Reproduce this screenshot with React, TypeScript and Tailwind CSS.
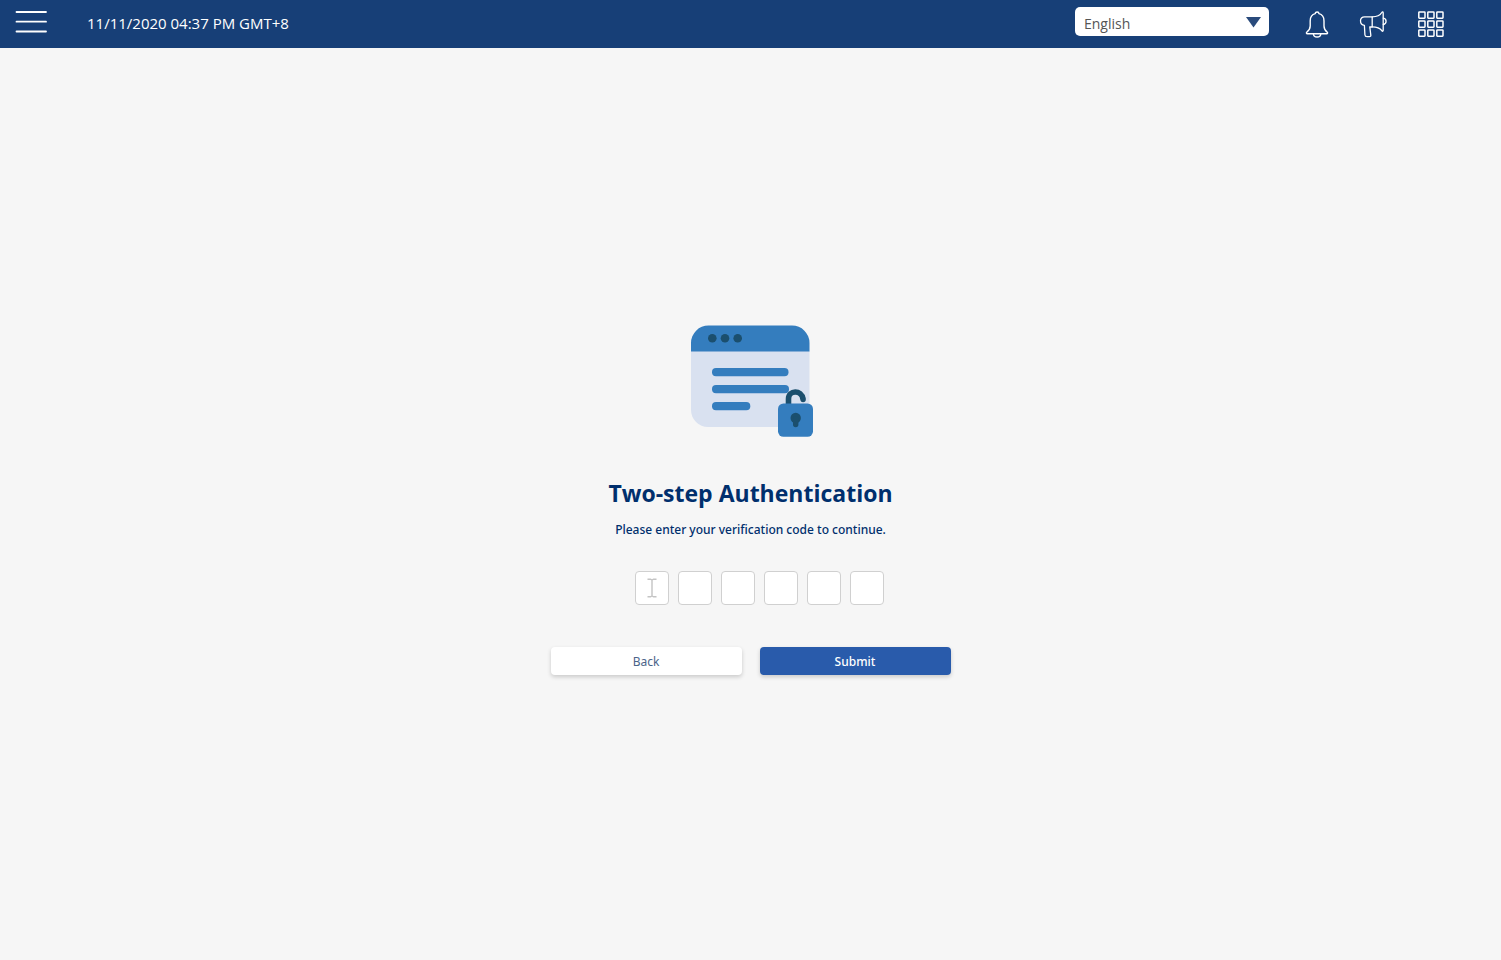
import { useRef, useState } from "react";

const CODE_LENGTH = 6;

function MenuIcon() {
  return (
    <svg width="32" height="24" viewBox="0 0 32 24" stroke="#ffffff" strokeWidth="1.8" strokeLinecap="round" aria-hidden="true">
      <path d="M1.500 2H31M1.500 11.700H31M1.500 21.500H31" />
    </svg>
  );
}

function BellIcon() {
  return (
    <svg width="24" height="28" viewBox="0 -0.4 24 28" fill="none" stroke="#ffffff" strokeWidth="1.4" strokeLinejoin="round" strokeLinecap="round" aria-hidden="true">
      <path d="M10.3 3.2C10.3 1 13.9 1 13.9 3.2C17.4 4 19 7 19 10.5V15.5C19 18.5 20 20 22.3 21.8C22.8 22.3 22.6 23.4 21.7 23.4H2.3C1.4 23.4 1.2 22.3 1.7 21.8C4.1 20 5.2 18.5 5.2 15.5V10.5C5.2 7 6.8 4 10.3 3.2Z" />
      <path d="M8.4 23.6C8.6 27.6 15.6 27.6 15.8 23.6" />
    </svg>
  );
}

function MegaphoneIcon() {
  return (
    <svg width="28" height="28" viewBox="-0.6 -0.6 28 28" fill="none" stroke="#ffffff" strokeWidth="1.3" strokeLinejoin="round" strokeLinecap="round" aria-hidden="true">
      <path d="M12.6 6.200H5C2.300 6.200 .9 8 .9 10.200C.9 12.600 2.400 14.600 4.800 14.800L5.300 24.200C5.400 25.600 6.100 26.100 7.400 26.100H9.800C11 26.100 11.300 25.400 11.200 24.500L10.200 16.400H12.600Z" />
      <path d="M12.600 6.200C17 6.200 20.500 4.800 22.200 1.900C22.800 1 23.600 1.300 23.600 2.300V19.700C23.600 20.700 22.800 21 22.200 20.100C20.400 17.400 17 16.200 12.600 16.200" />
      <path d="M23.700 7.600C27.400 8.100 27.400 13.400 23.700 13.900" />
    </svg>
  );
}

function AppsIcon() {
  const steps = [1, 10, 19];
  return (
    <svg width="28" height="28" viewBox="0 0 28 28" fill="none" stroke="#ffffff" strokeWidth="1.5" aria-hidden="true">
      {steps.map((y) => steps.map((x) => <rect key={`${x}-${y}`} x={x + 0.8} y={y + 1} width="6.2" height="6.2" rx="0.6" />))}
    </svg>
  );
}

function LockedWindow() {
  return (
    <svg width="124" height="112" viewBox="-1 0 124 112" aria-hidden="true">
      <path d="M1 26H119.5V102H18A17 17 0 0 1 1 85Z" fill="#d9e1f0" />
      <path d="M1 26.5V18A17.5 17.5 0 0 1 18.500 .5H102A17.500 17.500 0 0 1 119.500 18V26.500Z" fill="#347dbe" />
      <g fill="#1b4f6e">
        <circle cx="22.300" cy="13.300" r="4.300" />
        <circle cx="35" cy="13.300" r="4.300" />
        <circle cx="47.700" cy="13.300" r="4.300" />
      </g>
      <g fill="#347dbe">
        <rect x="22" y="43" width="76.500" height="8.300" rx="4" />
        <rect x="22" y="60" width="77" height="8.300" rx="4" />
        <rect x="22" y="77" width="38.300" height="8.300" rx="4" />
      </g>
      <path d="M98.500 80V74C98.500 65 111.500 64.500 113 74" fill="none" stroke="#1b4f6e" strokeWidth="5.600" />
      <circle cx="113.100" cy="74.500" r="2.700" fill="#1b4f6e" />
      <rect x="88" y="78.500" width="35" height="33.300" rx="5.500" fill="#347dbe" />
      <circle cx="105.700" cy="93" r="5.200" fill="#1b4f6e" />
      <path d="M105.700 94V99.500" stroke="#1b4f6e" strokeWidth="5.400" strokeLinecap="round" />
    </svg>
  );
}

function CodeFields() {
  const [digits, setDigits] = useState<string[]>(Array(CODE_LENGTH).fill(""));
  const fields = useRef<(HTMLInputElement | null)[]>([]);

  const update = (index: number, value: string) => {
    const digit = value.replace(/\D/g, "").slice(-1);
    setDigits((current) => current.map((d, i) => (i === index ? digit : d)));
    if (digit) fields.current[index + 1]?.focus();
  };

  return (
    <div role="group" aria-label="Verification code" className="flex gap-[9px] pl-[18px]">
      {digits.map((digit, index) => (
        <div key={index} className="relative">
          <input
            ref={(el) => {
              fields.current[index] = el;
            }}
            aria-label={`Digit ${index + 1}`}
            inputMode="numeric"
            value={digit}
            onChange={(event) => update(index, event.target.value)}
            className="block size-[34px] rounded-[4px] border border-[#d0d0d0] bg-white text-center text-base text-[#002f6d] outline-none"
          />
          {index === 0 && !digit && (
            <svg className="pointer-events-none absolute inset-0 m-auto" width="10" height="20" viewBox="0 0 10 20" fill="none" stroke="#c4c4c4" strokeWidth="1.400" aria-hidden="true">
              <path d="M.5 1.200H3.500L5 2L6.500 1.200H9.500M5 2V18M.5 18.800H3.500L5 18L6.500 18.800H9.500" />
            </svg>
          )}
        </div>
      ))}
    </div>
  );
}

export default function App() {
  return (
    <div className="flex min-h-screen flex-col bg-[#f6f6f6] font-['Noto_Sans','Open_Sans',sans-serif]">
      <header className="flex h-12 items-center bg-[#173f77] pr-14 pl-[15px] font-['Open_Sans','Noto_Sans',sans-serif] text-white">
        <button type="button" aria-label="Menu" className="pb-1">
          <MenuIcon />
        </button>
        <time className="mb-0.5 ml-10 text-[15px]" dateTime="2020-11-11T16:37+08:00">
          11/11/2020 04:37 PM GMT+8
        </time>
        <div className="relative mr-9 mb-[5px] ml-auto">
          <select aria-label="Language" className="block h-[29px] w-[194px] appearance-none rounded-[5px] bg-white px-[9px] pt-1 text-sm text-[#555555]">
            <option>English</option>
          </select>
          <svg className="pointer-events-none absolute top-[10px] right-2" width="15" height="11" viewBox="0 0 15 11" fill="#2a4b7c" aria-hidden="true">
            <path d="M0 0H15L7.500 10.500Z" />
          </svg>
        </div>
        <nav className="flex items-center gap-[30px]" aria-label="Tools">
          <button type="button" aria-label="Notifications">
            <BellIcon />
          </button>
          <button type="button" aria-label="Announcements">
            <MegaphoneIcon />
          </button>
          <button type="button" aria-label="Applications">
            <AppsIcon />
          </button>
        </nav>
      </header>

      <main className="flex flex-1 flex-col items-center justify-center pb-2">
        <LockedWindow />
        <h1 className="mt-10 font-['Open_Sans','Noto_Sans',sans-serif] text-[23px] leading-8 font-bold text-[#002f6d]">Two-step Authentication</h1>
        <p className="mt-[11px] text-xs leading-5 font-medium text-[#002f6d]">Please enter your verification code to continue.</p>
        <form className="mt-[31px] flex flex-col items-center gap-[42px]" onSubmit={(event) => event.preventDefault()}>
          <CodeFields />
          <div className="flex gap-[18px]">
            <button type="button" className="h-7 w-[191px] rounded-[4px] bg-white pt-0.5 text-xs text-[#4a6489] shadow-[0_2px_4px_rgba(0,0,0,0.18)]">
              Back
            </button>
            <button type="submit" className="h-7 w-[191px] rounded-[4px] bg-[#295bab] pt-0.5 text-xs font-medium text-white shadow-[0_2px_4px_rgba(0,0,0,0.18)]">
              Submit
            </button>
          </div>
        </form>
      </main>
    </div>
  );
}
